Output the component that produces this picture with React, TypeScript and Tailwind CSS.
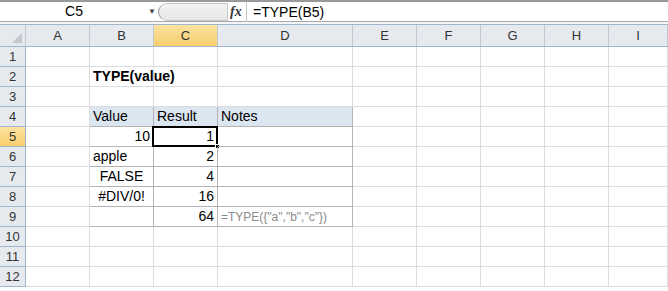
import React from 'react'

const cols = ['A', 'B', 'C', 'D', 'E', 'F', 'G', 'H', 'I']
const widths = ['w-[64px]', 'w-[64px]', 'w-[64px]', 'w-[135px]', 'w-[64px]', 'w-[64px]', 'w-[64px]', 'w-[64px]', 'flex-1']

type Cell = { text?: string; align?: 'l' | 'r' | 'c'; cls?: string }

const rows: Record<number, Record<string, Cell>> = {
  2: { B: { text: 'TYPE(value)', cls: 'font-bold' } },
  4: { B: { text: 'Value' }, C: { text: 'Result' }, D: { text: 'Notes' } },
  5: { B: { text: '10', align: 'r' }, C: { text: '1', align: 'r' } },
  6: { B: { text: 'apple' }, C: { text: '2', align: 'r' } },
  7: { B: { text: 'FALSE', align: 'c' }, C: { text: '4', align: 'r' } },
  8: { B: { text: '#DIV/0!', align: 'c' }, C: { text: '16', align: 'r' } },
  9: {
    C: { text: '64', align: 'r' },
    D: { text: '=TYPE({"a","b","c"})', cls: 'text-[12px] text-[#8a8a8a]' },
  },
}

const inTable = (r: number, c: string) => r >= 4 && r <= 9 && ['B', 'C', 'D'].includes(c)

const App = () => {
  return (
    <div className="w-[668px] h-[291px] overflow-hidden bg-white font-['Liberation_Sans',Arial,sans-serif] text-[14px] text-black">
      {/* formula bar */}
      <div className="h-[2px] bg-[#9a9a9a]" />
      <div className="flex h-[20px] items-center border-b border-[#a9a9a9] bg-white">
        <div className="w-[148px] text-center text-[14px]">C5</div>
        <div className="w-[10px] text-[8px] text-[#444]">▼</div>
        <div className="relative flex h-[20px] w-[88px] items-center">
          <div className="h-[18px] w-[70px] rounded-l-full border border-[#c8c8c8] border-l-[#9a9a9a] bg-gradient-to-b from-[#f4f4f4] to-[#e6e6e6]" />
          <span className="ml-[2px] font-['Liberation_Serif',serif] text-[14px] font-bold italic text-[#333]">fx</span>
        </div>
        <div className="h-[20px] border-l border-[#c8c8c8] pl-[6px] leading-[20px]">=TYPE(B5)</div>
      </div>
      <div className="h-[2px] bg-[#f4f6f9]" />
      {/* column headers */}
      <div className="flex h-[23px] border-y border-[#9eb6ce] bg-[#e6eaef] text-[13px] text-[#333]">
        <div className="relative w-[26px] border-r border-[#c0c8d2]">
          <div className="absolute bottom-[3px] right-[3px] h-0 w-0 border-b-[10px] border-l-[10px] border-b-[#c3c9d1] border-l-transparent" />
        </div>
        {cols.map((c, i) => (
          <div
            key={c}
            className={`${widths[i]} flex items-center justify-center border-r border-[#c0c8d2] ${c === 'C' ? 'bg-gradient-to-b from-[#fbe29f] to-[#f7cf6c]' : ''}`}
          >
            {c}
          </div>
        ))}
      </div>
      {/* rows */}
      {Array.from({ length: 12 }, (_, k) => k + 1).map((r) => (
        <div key={r} className="flex h-[20px]">
          <div
            className={`w-[26px] flex items-center justify-center border-r border-b border-[#9eb6ce] text-[13px] text-[#333] ${r === 5 ? 'bg-gradient-to-b from-[#fbe29f] to-[#f7cf6c]' : 'bg-[#e6eaef]'}`}
          >
            {r}
          </div>
          {cols.map((c, i) => {
            const cell = rows[r]?.[c]
            const t = inTable(r, c)
            const head = t && r === 4
            const sel = r === 5 && c === 'C'
            const just =
              cell?.align === 'r' ? 'justify-end pr-[3px]' : cell?.align === 'c' ? 'justify-center' : 'justify-start pl-[3px]'
            return (
              <div
                key={c}
                className={`${widths[i]} relative flex items-center whitespace-nowrap border-r border-b ${just} ${
                  t ? 'border-[#b4b4b4]' : 'border-[#dadcdd]'
                } ${head ? 'bg-[#dce6f1]' : ''} ${cell?.cls ?? ''}`}
              >
                {cell?.text}
                {sel && (
                  <>
                    <div className="absolute -left-[2px] -top-[1px] bottom-[-1px] right-[-1px] border-2 border-black" />
                    <div className="absolute -bottom-[3px] -right-[3px] h-[5px] w-[5px] border border-white bg-black" />
                  </>
                )}
              </div>
            )
          })}
        </div>
      ))}
    </div>
  )
}

export default App
